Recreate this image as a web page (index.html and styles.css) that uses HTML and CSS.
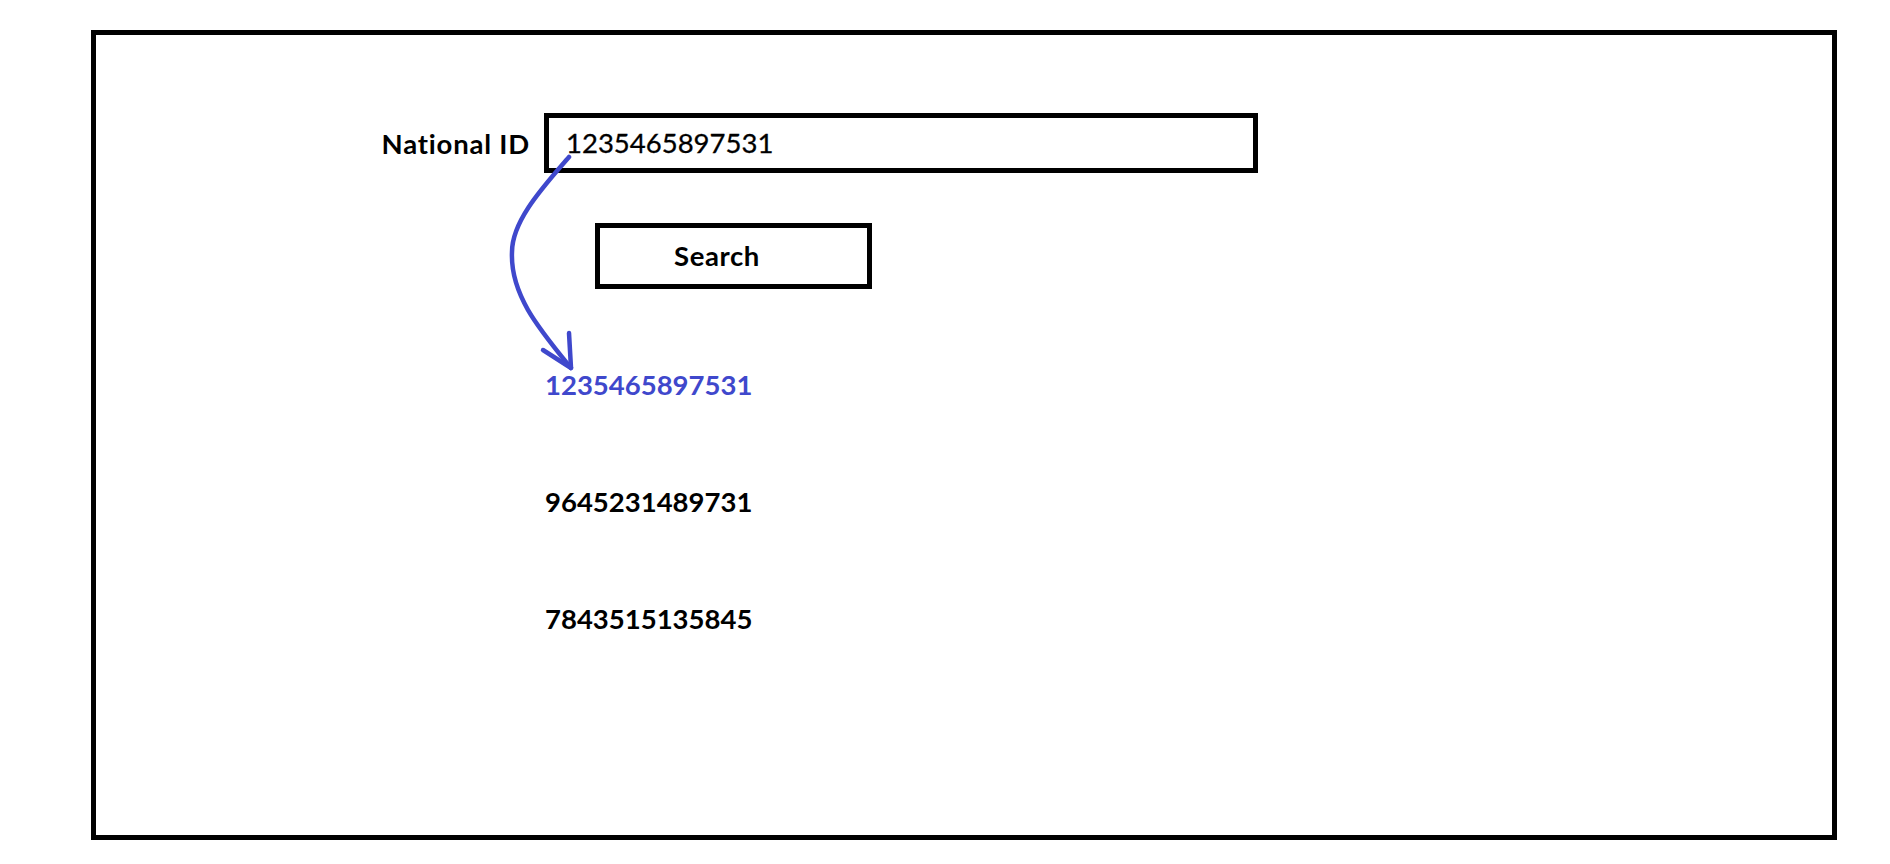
FILE: index.html
```html
<!DOCTYPE html>
<html lang="en">
<head>
<meta charset="utf-8">
<title>National ID Search</title>
<link rel="stylesheet" href="styles.css">
</head>
<body>
<div class="frame">
  <div class="form">
    <label class="label" for="nid">National ID</label>
    <div class="input" id="nid">1235465897531</div>
    <div class="button-row"><div class="button">Search</div></div>
    <ul class="results">
      <li class="result active">1235465897531</li>
      <li class="result">9645231489731</li>
      <li class="result">7843515135845</li>
    </ul>
  </div>
  <svg class="arrow" width="1890" height="864" viewBox="0 0 1890 864" aria-hidden="true">
    <path d="M569,157 C545,185 512,220 512,252 C510,295 540,330 571,368" fill="none" stroke="#3F48CC" stroke-width="4.5" stroke-linecap="round"/>
    <path d="M569,333 L571,368 L543,350" fill="none" stroke="#3F48CC" stroke-width="4.5" stroke-linecap="round" stroke-linejoin="round"/>
  </svg>
</div>
</body>
</html>
```
FILE: styles.css
```css
html, body {
  margin: 0;
  padding: 0;
  background: #ffffff;
}

body {
  font-family: Lato, "Open Sans", "Liberation Sans", sans-serif;
  color: #000000;
  width: 1890px;
  height: 864px;
  overflow: hidden;
}

.frame {
  box-sizing: border-box;
  margin: 30px 0 0 91px;
  width: 1746px;
  height: 810px;
  border: 5px solid #000000;
}

.form {
  display: grid;
  grid-template-columns: 434px 714px;
  column-gap: 14px;
  padding-top: 78px;
}

.label {
  grid-column: 1;
  align-self: center;
  justify-self: end;
  font-weight: 700;
  font-size: 27.5px;
  line-height: 34px;
  letter-spacing: 0.8px;
  padding-top: 2px;
}

.input {
  grid-column: 2;
  box-sizing: border-box;
  height: 60px;
  border: 5px solid #000000;
  padding-left: 17px;
  display: flex;
  align-items: center;
  font-size: 27.5px;
  line-height: 34px;
  -webkit-text-stroke: 0.3px #000000;
}

.button-row {
  grid-column: 2;
  margin-top: 50px;
  padding-left: 51px;
}

.button {
  box-sizing: border-box;
  width: 277px;
  height: 66px;
  border: 5px solid #000000;
  padding-left: 74px;
  display: flex;
  align-items: center;
  font-weight: 700;
  font-size: 27.5px;
  line-height: 34px;
  letter-spacing: 0.6px;
}

.results {
  grid-column: 2;
  list-style: none;
  margin: 79px 0 0 0;
  padding: 0 0 0 1px;
  display: flex;
  flex-direction: column;
  gap: 83px;
}

.result {
  font-weight: 700;
  font-size: 27.5px;
  line-height: 34px;
}

.result.active {
  color: #3F48CC;
}

.arrow {
  position: absolute;
  left: 0;
  top: 0;
  pointer-events: none;
}
```
